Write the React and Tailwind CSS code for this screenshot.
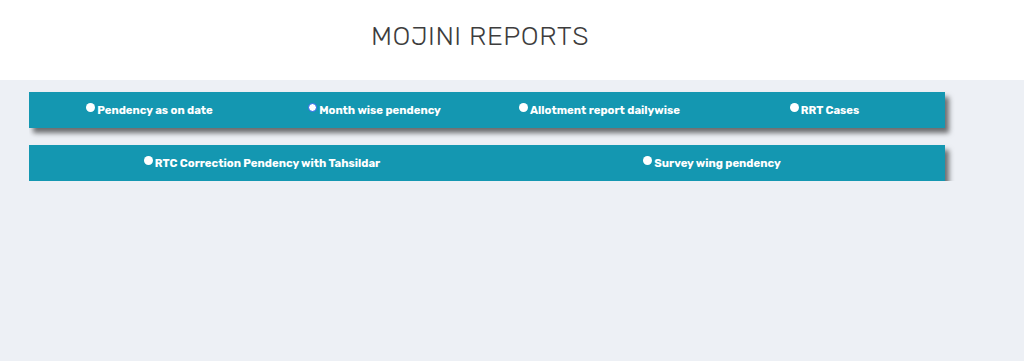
import React, { useState } from 'react';

const rowOne = [
    { id: 'pendency', label: 'Pendency as on date' },
    { id: 'month', label: 'Month wise pendency' },
    { id: 'allotment', label: 'Allotment report dailywise' },
    { id: 'rrt', label: 'RRT Cases' },
];

const rowTwo = [
    { id: 'rtc', label: 'RTC Correction Pendency with Tahsildar' },
    { id: 'survey', label: 'Survey wing pendency' },
];

const Option = ({ item, focused, onPick }) => (
    <label className="flex items-center justify-center cursor-pointer" onClick={() => onPick(item.id)}>
        <span
            className={
                'mr-[2px] h-[9px] w-[9px] shrink-0 rounded-full bg-white -translate-y-[3px] ' +
                (focused ? 'border-[1.5px] border-[#2563eb]' : '')
            }
        />
        <span className="text-[11.3px] font-bold text-white leading-[14px]">{item.label}</span>
    </label>
);

export default function App() {
    const [focus, setFocus] = useState('month');

    return (
        <div className="min-h-[361px] bg-[#edf0f5]" style={{ fontFamily: 'Rubik, "Open Sans", "Noto Sans", sans-serif' }}>
            <header className="h-[80px] bg-white flex items-center justify-center">
                <h1 className="text-[27px] font-light text-[#3d3d3d] tracking-[0.5px] -mt-[7px] -ml-[64px]">MOJINI REPORTS</h1>
            </header>

            <div className="ml-[29px] w-[926px] overflow-hidden pr-[10px] pt-[12px]">
                <div className="h-[36px] px-[8px] bg-[#1497b1] shadow-[4px_5px_5px_rgba(0,0,0,0.55)] grid grid-cols-4 items-center">
                    {rowOne.map((item) => (
                        <Option key={item.id} item={item} focused={focus === item.id} onPick={setFocus} />
                    ))}
                </div>
                <div className="mt-[17px] h-[36px] px-[8px] bg-[#1497b1] shadow-[4px_5px_5px_rgba(0,0,0,0.55)] grid grid-cols-2 items-center">
                    {rowTwo.map((item) => (
                        <Option key={item.id} item={item} focused={focus === item.id} onPick={setFocus} />
                    ))}
                </div>
            </div>
        </div>
    );
}
